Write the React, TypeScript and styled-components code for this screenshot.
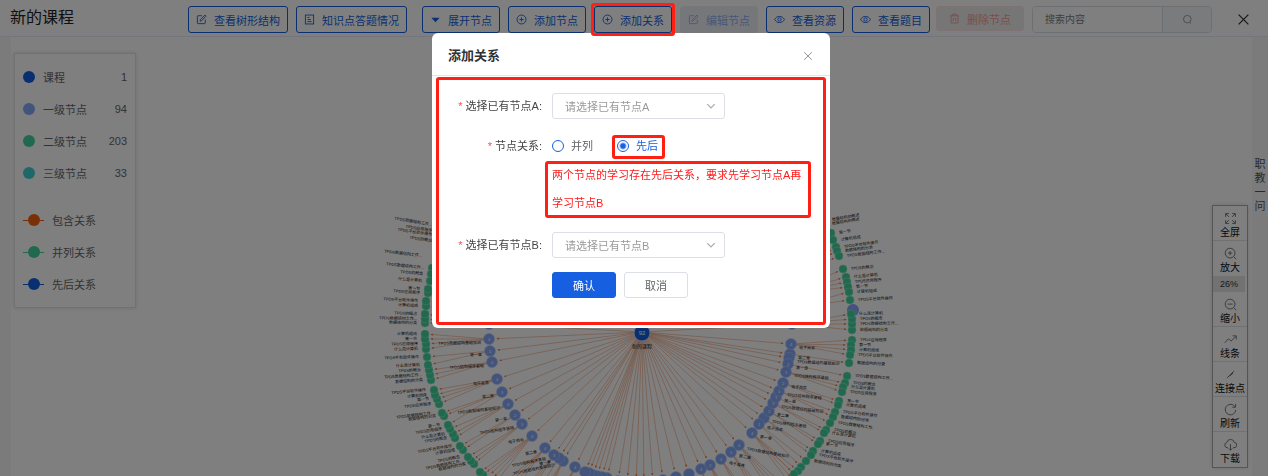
import React from "react";
import styled, { createGlobalStyle, css } from "styled-components";

const GlobalStyle = createGlobalStyle`
  *, *::before, *::after { box-sizing: border-box; }
  body {
    margin: 0;
    background: #fff;
    color: #333;
    font-family: "Liberation Sans", "Noto Sans CJK SC", sans-serif;
    font-size: 11px;
  }
  button, input, select { font: inherit; margin: 0; }
`;

const BLUE = "#155fe0";
const LIGHT_BLUE = "#85a9f8";
const GREEN = "#40d29c";
const ORANGE = "#f2600c";

/* ---------- icons ---------- */

const icons = {
  edit: (
    <>
      <path d="M8.5 2.5H3a1 1 0 0 0-1 1V13a1 1 0 0 0 1 1h9.5a1 1 0 0 0 1-1V8" />
      <path d="M13 1.5l1.600 1.600-6.400 6.600-2.400.7.700-2.400z" />
    </>
  ),
  doc: (
    <>
      <rect x="2" y="1.5" width="12" height="13" />
      <path d="M5 5h3M5 8h5M5 11h6" />
    </>
  ),
  caret: <path d="M2 5.5h12L8 12z" fill="currentColor" stroke="none" />,
  plus: (
    <>
      <circle cx="8" cy="8" r="6.5" />
      <path d="M8 5v6M5 8h6" />
    </>
  ),
  eye: (
    <>
      <path d="M.8 8C2.5 5 5 3.5 8 3.5S13.5 5 15.2 8C13.5 11 11 12.5 8 12.5S2.5 11 .8 8z" />
      <circle cx="8" cy="8" r="2.4" />
    </>
  ),
  trash: <path d="M1.5 4h13M5.5 4V1.5h5V4M3 4v10.5h10V4M6.3 7v4.5M9.7 7v4.5" />,
  search: (
    <>
      <circle cx="7.7" cy="7.5" r="5.5" />
      <path d="M11 12.2l2 1.6" />
    </>
  ),
  close: <path d="M2 2l12 12M14 2L2 14" />,
  chevron: <path d="M2 5l6 6 6-6" />,
  full: (
    <path d="M2 6V2h4M2 2l4 4M10 2h4v4M14 2l-4 4M2 10v4h4M2 14l4-4M14 10v4h-4M14 14l-4-4" />
  ),
  zoomIn: (
    <>
      <circle cx="7.5" cy="7.5" r="6" />
      <path d="M12 12l3 3M7.5 5v5M5 7.5h5" />
    </>
  ),
  zoomOut: (
    <>
      <circle cx="7.5" cy="7.5" r="6" />
      <path d="M12 12l3 3M4.5 7.5h6" />
    </>
  ),
  trend: <path d="M1 12l4.5-5 3 3L15 4M10.5 3.5H15V8" />,
  link: (
    <>
      <path d="M3.5 12.5l9-9" />
      <path d="M5.5 10.5l4-4 .6 .8zM7 9l4-4-1 2.500z" fill="currentColor" />
    </>
  ),
  refresh: (
    <>
      <path d="M14.5 8.5A6.5 6.5 0 1 1 12.600 3.5L14 5" />
      <path d="M14.3 1.2V5.2H10.3" />
    </>
  ),
  download: (
    <>
      <path d="M5 12H4a3.3 3.3 0 0 1-.5-6.5 4.6 4.6 0 0 1 9-.2A3.3 3.3 0 0 1 12 12h-1" />
      <path d="M8 7.5V15M5.8 12.8L8 15l2.2-2.2" />
    </>
  ),
};

type IconName = keyof typeof icons;

const Svg = styled.svg`
  display: block;
  flex: none;
  fill: none;
  stroke: currentColor;
`;

function Icon({ name, size = 11, weight = 1.3 }: { name: IconName; size?: number; weight?: number }) {
  return (
    <Svg width={size} height={size} viewBox="0 0 16 16" strokeWidth={weight} aria-hidden="true">
      {icons[name]}
    </Svg>
  );
}

/* ---------- header ---------- */

const Page = styled.div`
  display: flex;
  flex-direction: column;
  min-height: 100vh;
`;

const Header = styled.header`
  display: flex;
  align-items: flex-start;
  height: 37px;
  padding: 6px 18px 0 10px;
  border-bottom: 1px solid #e4ebf8;
`;

const Title = styled.h1`
  flex: 1;
  margin: 0;
  font-size: 16px;
  font-weight: 400;
  line-height: 24px;
  white-space: nowrap;
  color: #222;
`;

const Toolbar = styled.div`
  display: flex;
  gap: 8px;
`;

const Group = styled.div`
  display: flex;
  gap: 8px;
`;

const MainGroup = styled(Group)`
  margin: 0 -2px 0 7px;
`;

const ToolButton = styled.button<{ $tone?: "muted" | "danger" }>`
  display: flex;
  align-items: center;
  gap: 7px;
  height: 27px;
  padding: 0 7px;
  border: 1px solid ${BLUE};
  border-radius: 3px;
  background: #fff;
  color: ${BLUE};
  white-space: nowrap;
  ${(p) =>
    p.$tone === "muted" &&
    css`
      border-color: #eceff5;
      background: #eceff5;
      color: #8fb0ee;
    `}
  ${(p) =>
    p.$tone === "danger" &&
    css`
      height: 25px;
      padding: 0 12px;
      border-color: #fde2e2;
      background: #ededed;
      color: #f79a9a;
    `}
`;

const Highlight = styled.div<{ $inset: string }>`
  position: relative;
  &::after {
    content: "";
    position: absolute;
    z-index: 20;
    inset: ${(p) => p.$inset};
    border: 3px solid #ff2013;
    border-radius: 3px;
    pointer-events: none;
  }
`;

const Search = styled.form`
  display: flex;
  width: 180px;
  height: 27px;
  border: 1px solid #dcdfe6;
  border-radius: 4px;
  overflow: hidden;
`;

const SearchInput = styled.input`
  flex: 1;
  min-width: 0;
  padding: 0 12px;
  border: 0;
  background: #fff;
  font-size: 10px;
  &::placeholder { color: #808080; opacity: 1; }
`;

const SearchButton = styled.button`
  display: grid;
  place-items: center;
  width: 49px;
  border: 0;
  border-left: 1px solid #dcdfe6;
  background: #f5f7fa;
  color: #909399;
`;

const PlainButton = styled.button`
  display: grid;
  place-items: center;
  padding: 0;
  border: 0;
  background: none;
  color: inherit;
`;

const CloseCell = styled.div`
  display: flex;
  align-items: center;
  height: 27px;
  margin-left: 25px;
`;

/* ---------- workspace ---------- */

const Workspace = styled.main`
  display: flex;
  flex: 1;
  padding-left: 11px;
  background: #f6f6f6;
`;

const Stage = styled.section`
  position: relative;
  display: flex;
  flex: 1;
  justify-content: space-between;
  align-items: flex-start;
  padding: 16px 4px 8px 3px;
  background: #fff;
  overflow: hidden;
`;

const Canvas = styled.div`
  position: absolute;
  inset: 0;
  display: flex;
  justify-content: center;
  align-items: flex-start;
  padding: 163px 0 0 21px;
`;

const Panel = styled.aside`
  position: relative;
  border: 1px solid #e2e2e2;
  background: #fff;
  box-shadow: 0 0 4px rgba(0, 0, 0, 0.14);
`;

const Legend = styled(Panel)`
  width: 122px;
  padding: 7px 8px;
`;

const LegendList = styled.ul`
  margin: 0;
  padding: 0;
  list-style: none;
  & + & { margin-top: 15px; }
`;

const LegendRow = styled.li`
  display: flex;
  align-items: center;
  gap: 8px;
  height: 32px;
  color: #666;
`;

const Count = styled.span`
  margin-left: auto;
`;

const Dot = styled.span<{ $color: string }>`
  width: 12px;
  height: 12px;
  border-radius: 50%;
  background: ${(p) => p.$color};
`;

const LineDot = styled.span<{ $color: string }>`
  display: flex;
  justify-content: center;
  width: 21px;
  background: linear-gradient(${(p) => p.$color}, ${(p) => p.$color}) center / 100% 1px no-repeat;
`;

const Dock = styled(Panel)`
  width: 36px;
  margin-top: 152px;
  border-color: #aaa;
`;

const DockButton = styled.button<{ $line?: boolean }>`
  display: flex;
  flex-direction: column;
  align-items: center;
  gap: 1px;
  width: 100%;
  height: 35px;
  padding: 6px 0 0;
  border: 0;
  border-bottom: ${(p) => (p.$line ? "1px solid #e2e2e2" : "0")};
  background: none;
  color: #777;
`;

const DockLabel = styled.span`
  font-size: 10px;
  line-height: 14px;
  white-space: nowrap;
  color: #111;
`;

const ZoomLevel = styled.div`
  height: 16px;
  margin-right: 2px;
  background: #e4e4e4;
  font-size: 9px;
  line-height: 16px;
  text-align: center;
`;

const Gutter = styled.aside`
  display: flex;
  flex-direction: column;
  align-items: center;
  width: 16px;
  padding-top: 120px;
  line-height: 14px;
  color: #555;
`;

/* ---------- graph ---------- */

type Point = [number, number];

const HUB: Point = [280, 132];

const topics: [number, number, string][] = [
  [127, 124, ""], [127, 139, "4"], [128, 151, "1"], [130, 162, "4"], [135, 179, "4"], [140, 192, "3"],
  [146, 204, "4"], [153, 215, "2"], [160, 224, "3"], [170, 236, "4"], [183, 248, "4"], [201, 261, ""],
  [197, 258, ""], [192, 255, "3"], [213, 267, "4"], [245, 278, ""], [240, 277, ""], [235, 276, ""],
  [231, 275, ""], [227, 273, ""], [223, 272, ""], [256, 281, ""], [265, 283, ""], [274, 284, ""],
  [282, 284, ""], [291, 283, ""], [301, 280, ""], [314, 277, ""], [327, 274, ""], [348, 265, "2"],
  [339, 269, "3"], [359, 259, "4"], [369, 252, "1"], [377, 245, "4"], [390, 233, "4"], [402, 218, ""],
  [397, 224, "1"], [407, 211, "2"], [411, 203, "3"], [414, 197, "1"], [417, 191, "1"], [421, 183, "2"],
  [428, 154, ""], [427, 158, ""], [426, 164, "1"], [424, 172, "3"], [429, 144, "4"], [430, 124, ""],
];

const hiddenTopics: Point[] = [
  [129, 108], [132, 94], [137, 80], [429, 108], [426, 94], [421, 80],
];

const scale = (list: Point[], dx: number): Point[] =>
  list.map(([x, y]) => [Math.round(x / 3) + dx, Math.round(y / 3)]);

const leftLeaves = scale(
  [
    [157, 205], [153, 222], [150, 243], [145, 278], [145, 266], [138, 317], [139, 303], [135, 370],
    [135, 358], [135, 343], [138, 446], [137, 432], [136, 417], [135, 401], [141, 470], [153, 540],
    [150, 524], [147, 510], [144, 495], [177, 612], [171, 597], [166, 584], [162, 569], [191, 649],
    [186, 638], [225, 714], [218, 702], [210, 688], [204, 676], [248, 750], [240, 739], [281, 793],
    [272, 782], [264, 771], [310, 826], [300, 815],
  ],
  18,
);

const rightLeaves = scale(
  [
    [123, 100], [128, 119], [137, 140], [142, 154], [147, 167], [160, 208], [167, 232], [171, 246],
    [174, 262], [176, 276], [180, 300], [186, 389], [186, 373], [186, 357], [184, 342], [185, 420],
    [184, 434], [182, 450], [181, 465], [177, 490], [170, 527], [164, 550], [160, 562], [157, 575],
    [148, 603], [144, 615], [135, 637], [128, 650], [119, 669], [109, 689], [103, 700], [90, 723],
    [84, 732], [69, 753], [62, 764], [48, 782], [33, 802], [24, 812], [12, 822],
  ],
  428,
);

const lowerLeaves: Point[] = Array.from({ length: 70 }, (_, i) => {
  const a = ((43 + i * 1.36) * Math.PI) / 180;
  return [HUB[0] + 212 * Math.cos(a), HUB[1] + 212 * Math.sin(a)];
});

const names = [
  "TPDS数据结构工作...", "TPDS应用程序", "TPDS平台软件操作", "TPDS的概念", "第一节",
  "数据结构的分类", "什么是计算机", "计算机组成",
];
const topicNames = ["TPDS数据结构基础知识", "第一章", "TPDS结构程序基础", "电子商务", "第二章"];

const angleOf = ([x, y]: Point) => Math.atan2(y - HUB[1], x - HUB[0]);

function parentOf(leaf: Point): Point {
  const all: Point[] = [...topics.map(([x, y]) => [x, y] as Point), ...hiddenTopics];
  const a = angleOf(leaf);
  const gap = (p: Point) => {
    const d = Math.abs(angleOf(p) - a);
    return Math.min(d, 2 * Math.PI - d);
  };
  return all.reduce((best, p) => (gap(p) < gap(best) ? p : best));
}

function shorten([x1, y1]: Point, [x2, y2]: Point, by: number): Point {
  const len = Math.hypot(x2 - x1, y2 - y1) || 1;
  return [x2 - ((x2 - x1) / len) * by, y2 - ((y2 - y1) / len) * by];
}

function Edge({ from, to, gap }: { from: Point; to: Point; gap: number }) {
  const [x, y] = shorten(from, to, gap);
  return <line x1={from[0]} y1={from[1]} x2={x} y2={y} markerEnd="url(#tip)" />;
}

function Tag({ x, y, text }: { x: number; y: number; text: string }) {
  const left = x < HUB[0];
  const tx = left ? x - 8 : x + 8;
  const turn = ((y - HUB[1]) / 11) * (left ? -1 : 1);
  return (
    <text x={tx} y={y + 1} textAnchor={left ? "end" : "start"} transform={`rotate(${turn} ${tx} ${y})`}>
      {text}
    </text>
  );
}

const GraphSvg = styled.svg`
  display: block;
  flex: none;
  overflow: visible;
  line { stroke: #f0a27c; stroke-width: 0.6; }
  text { font-size: 4px; fill: #111; }
  .value { fill: #fff; text-anchor: middle; }
  .total { fill: #fff; font-size: 6px; text-anchor: middle; }
  .course { font-size: 5px; text-anchor: middle; }
`;

function Graph() {
  const leaves = [...leftLeaves, ...rightLeaves];
  return (
    <GraphSvg width="560" height="276" viewBox="0 0 560 276" role="img" aria-label="课程知识图谱">
      <defs>
        <marker id="tip" viewBox="0 0 4 4" refX="3" refY="2" markerWidth="4" markerHeight="4" orient="auto">
          <path d="M0 0L4 2L0 4z" fill="#e8793f" />
        </marker>
      </defs>
      {[...leaves, ...lowerLeaves].map((p, i) => (
        <Edge key={i} from={parentOf(p)} to={p} gap={6} />
      ))}
      {topics.map(([x, y], i) => (
        <Edge key={i} from={HUB} to={[x, y]} gap={8} />
      ))}
      <circle cx="491" cy="110" r="6" fill={LIGHT_BLUE} />
      {leaves.map(([x, y], i) => (
        <circle key={i} cx={x} cy={y} r="4" fill={GREEN} stroke="#8fe5c6" strokeWidth="0.6" />
      ))}
      {leaves.map(([x, y], i) =>
        y < 266 ? <Tag key={i} x={x} y={y} text={names[(i * 3) % names.length]} /> : null,
      )}
      {[25, 31, 35, 41, 56].map((y, i) => (
        <Tag key={y} x={i === 4 ? 68 : 78} y={y} text={names[i % 4]} />
      ))}
      {[20, 24].map((y) => (
        <Tag key={y} x={462} y={y} text="数据结构的概述" />
      ))}
      {topics
        .filter(([x, y]) => y > 135 && y < 262 && (x < 225 || x > 330))
        .map(([x, y], i) => (
          <Tag key={i} x={x} y={y + 4} text={topicNames[i % topicNames.length]} />
        ))}
      {topics.map(([x, y, value], i) => (
        <g key={i}>
          <circle cx={x} cy={y} r="5.5" fill={LIGHT_BLUE} stroke="#b5cafa" strokeWidth="0.6" />
          {value && <text className="value" x={x} y={y + 2}>{value}</text>}
        </g>
      ))}
      <circle cx="280" cy="133" r="8" fill={BLUE} stroke="#c5d8fa" />
      <text className="total" x="280" y="135">92</text>
      <text className="course" x="280" y="148">新的课程</text>
    </GraphSvg>
  );
}

/* ---------- dialog ---------- */

const Overlay = styled.div`
  position: fixed;
  inset: 0;
  z-index: 10;
  display: flex;
  justify-content: center;
  align-items: flex-start;
  padding: 33px 6px 0 0;
  background: rgba(0, 0, 0, 0.5);
`;

const Dialog = styled.section`
  width: 398px;
  border-radius: 6px;
  background: #fff;
`;

const DialogHeader = styled.header`
  display: flex;
  align-items: center;
  justify-content: space-between;
  height: 43px;
  padding: 4px 17px 0 16px;
  border-bottom: 1px solid #e4e4e4;
  color: #909399;
`;

const DialogTitle = styled.h2`
  margin: 0;
  font-size: 13px;
  line-height: 20px;
  color: #303133;
`;

const Form = styled.form`
  display: flex;
  flex-direction: column;
  gap: 14px;
  padding: 17px 0 30px;
`;

const Field = styled.div`
  display: grid;
  grid-template-columns: 110px 253px;
  column-gap: 10px;
  line-height: 26px;
`;

const labelText = css`
  text-align: right;
  color: #444;
  &::before {
    content: "*";
    margin-right: 3px;
    color: #ff4d4f;
  }
`;

const FieldLabel = styled.label`${labelText}`;
const FieldCaption = styled.span`${labelText}`;

const SelectBox = styled.div`
  display: grid;
  align-items: center;
  width: 173px;
  height: 26px;
  color: #a8abb2;
  & > * { grid-area: 1 / 1; }
  & > svg { justify-self: end; margin-right: 9px; pointer-events: none; }
`;

const Select = styled.select`
  appearance: none;
  width: 100%;
  height: 26px;
  padding: 0 24px 0 12px;
  border: 1px solid #dcdfe6;
  border-radius: 3px;
  background: #fff;
  color: #999;
`;

const Radios = styled.div`
  display: flex;
  gap: 24px;
`;

const RadioLabel = styled.label`
  display: flex;
  align-items: center;
  gap: 7px;
  height: 26px;
  color: #606266;
  &:has(input:checked) { color: ${BLUE}; }
`;

const Radio = styled.input`
  appearance: none;
  width: 12px;
  height: 12px;
  border: 1px solid ${BLUE};
  border-radius: 50%;
  background: #fff;
  &:checked { background: radial-gradient(circle, ${BLUE} 2px, #fff 4px); }
`;

const Note = styled.p`
  margin: 0;
  padding: 2px 0 1px;
  line-height: 28px;
  color: #ff1a1a;
`;

const Actions = styled.div`
  display: flex;
  gap: 8px;
  padding-left: 120px;
`;

const ActionButton = styled.button<{ $primary?: boolean }>`
  width: 64px;
  height: 26px;
  padding: 0;
  border: 1px solid ${(p) => (p.$primary ? BLUE : "#dcdfe6")};
  border-radius: 3px;
  background: ${(p) => (p.$primary ? BLUE : "#fff")};
  color: ${(p) => (p.$primary ? "#fff" : "#606266")};
`;

function NodeSelect({ node }: { node: string }) {
  const id = `node-${node}`;
  return (
    <Field>
      <FieldLabel htmlFor={id}>选择已有节点{node}:</FieldLabel>
      <SelectBox>
        <Select id={id} defaultValue="">
          <option value="">请选择已有节点{node}</option>
        </Select>
        <Icon name="chevron" size={10} weight={2} />
      </SelectBox>
    </Field>
  );
}

function RelationDialog() {
  return (
    <Overlay>
      <Dialog role="dialog" aria-labelledby="dialog-title">
        <DialogHeader>
          <DialogTitle id="dialog-title">添加关系</DialogTitle>
          <PlainButton aria-label="关闭">
            <Icon name="close" size={10} weight={1.6} />
          </PlainButton>
        </DialogHeader>
        <Highlight $inset="1px 4px 3px">
          <Form onSubmit={(e) => e.preventDefault()}>
            <NodeSelect node="A" />
            <Field role="radiogroup" aria-labelledby="relation">
              <FieldCaption id="relation">节点关系:</FieldCaption>
              <div>
                <Radios>
                  <RadioLabel>
                    <Radio type="radio" name="relation" />
                    并列
                  </RadioLabel>
                  <Highlight $inset="2px -7px 0 -5px">
                    <RadioLabel>
                      <Radio type="radio" name="relation" defaultChecked />
                      先后
                    </RadioLabel>
                  </Highlight>
                </Radios>
                <Highlight $inset="2px -6px 0 -7px">
                  <Note>两个节点的学习存在先后关系，要求先学习节点A再学习节点B</Note>
                </Highlight>
              </div>
            </Field>
            <NodeSelect node="B" />
            <Actions>
              <ActionButton $primary type="submit">确认</ActionButton>
              <ActionButton type="button">取消</ActionButton>
            </Actions>
          </Form>
        </Highlight>
      </Dialog>
    </Overlay>
  );
}

/* ---------- page ---------- */

const levels: [string, string, number][] = [
  ["课程", BLUE, 1],
  ["一级节点", LIGHT_BLUE, 94],
  ["二级节点", GREEN, 203],
  ["三级节点", "#3fd0d4", 33],
];

const relations: [string, string][] = [
  ["包含关系", ORANGE],
  ["并列关系", GREEN],
  ["先后关系", BLUE],
];

function DockItem({ icon, label, line }: { icon: IconName; label: string; line?: boolean }) {
  return (
    <DockButton $line={line}>
      <Icon name={icon} size={13} weight={1.2} />
      <DockLabel>{label}</DockLabel>
    </DockButton>
  );
}

export default function App() {
  return (
    <>
      <GlobalStyle />
      <Page>
        <Header>
          <Title>新的课程</Title>
          <Toolbar>
            <Group>
              <ToolButton><Icon name="edit" />查看树形结构</ToolButton>
              <ToolButton><Icon name="doc" />知识点答题情况</ToolButton>
            </Group>
            <MainGroup>
              <ToolButton><Icon name="caret" />展开节点</ToolButton>
              <ToolButton><Icon name="plus" />添加节点</ToolButton>
              <Highlight $inset="-3px -3px">
                <ToolButton><Icon name="plus" />添加关系</ToolButton>
              </Highlight>
              <ToolButton $tone="muted" disabled><Icon name="edit" />编辑节点</ToolButton>
              <ToolButton><Icon name="eye" />查看资源</ToolButton>
              <ToolButton><Icon name="eye" />查看题目</ToolButton>
            </MainGroup>
            <ToolButton $tone="danger" disabled><Icon name="trash" />删除节点</ToolButton>
            <Search role="search" onSubmit={(e) => e.preventDefault()}>
              <SearchInput aria-label="搜索内容" placeholder="搜索内容" />
              <SearchButton aria-label="搜索"><Icon name="search" /></SearchButton>
            </Search>
          </Toolbar>
          <CloseCell>
            <PlainButton aria-label="退出"><Icon name="close" size={13} weight={1.6} /></PlainButton>
          </CloseCell>
        </Header>
        <Workspace>
          <Stage>
            <Canvas><Graph /></Canvas>
            <Legend>
              <LegendList>
                {levels.map(([name, color, count]) => (
                  <LegendRow key={name}>
                    <Dot $color={color} />
                    {name}
                    <Count>{count}</Count>
                  </LegendRow>
                ))}
              </LegendList>
              <LegendList>
                {relations.map(([name, color]) => (
                  <LegendRow key={name}>
                    <LineDot $color={color}><Dot $color={color} /></LineDot>
                    {name}
                  </LegendRow>
                ))}
              </LegendList>
            </Legend>
            <Dock>
              <DockItem icon="full" label="全屏" line />
              <DockItem icon="zoomIn" label="放大" />
              <ZoomLevel>26%</ZoomLevel>
              <DockItem icon="zoomOut" label="缩小" line />
              <DockItem icon="trend" label="线条" line />
              <DockItem icon="link" label="连接点" line />
              <DockItem icon="refresh" label="刷新" line />
              <DockItem icon="download" label="下载" />
            </Dock>
          </Stage>
          <Gutter>
            <span>职</span>
            <span>教</span>
            <span>一</span>
            <span>问</span>
          </Gutter>
        </Workspace>
      </Page>
      <RelationDialog />
    </>
  );
}
